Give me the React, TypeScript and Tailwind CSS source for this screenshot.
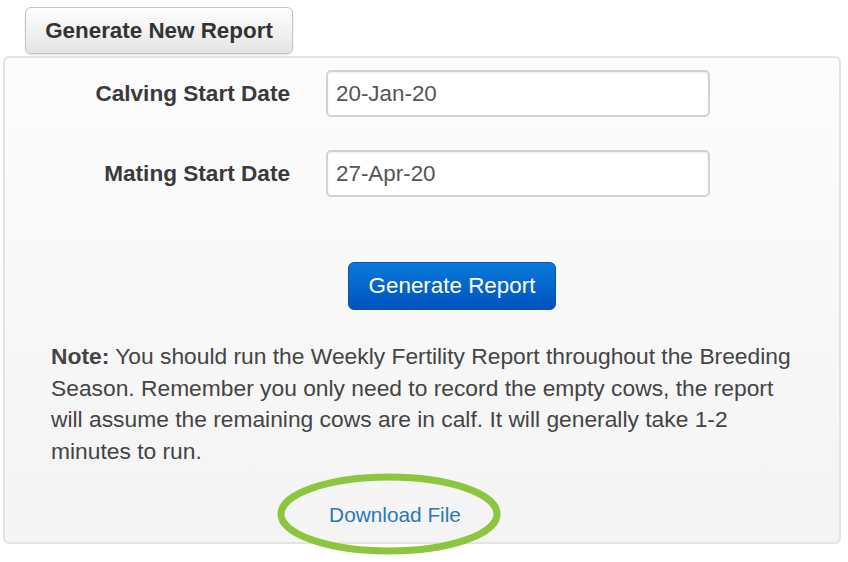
const fields = [
  { label: "Calving Start Date", value: "20-Jan-20" },
  { label: "Mating Start Date", value: "27-Apr-20" },
];

const App = () => {
  return (
    <div
      className="w-[848px] h-[562px] bg-white text-[#333] overflow-hidden"
      style={{ fontFamily: '"Liberation Sans", Arial, sans-serif' }}
    >
      <div className="pt-[7px] pl-[25px]">
        <button className="w-[268px] h-[47px] rounded-[6px] border border-[#c4c4c4] bg-gradient-to-b from-white to-[#e4e4e4] text-[22.4px] font-bold text-[#333] shadow-[0_1px_2px_rgba(0,0,0,0.12)]">
          Generate New Report
        </button>
      </div>

      <div className="mt-[2px] ml-[3px] w-[838px] h-[488px] rounded-[6px] border-2 border-[#e3e3e3] bg-gradient-to-b from-[#fcfcfc] to-[#f4f4f4] px-[29px] pt-[12px]">
        <div className="flex flex-col gap-[33px]">
          {fields.map((f) => (
            <div key={f.label} className="flex items-center">
              <label className="w-[256px] text-right text-[22.6px] font-bold text-[#3a3a3a]">
                {f.label}
              </label>
              <input
                readOnly
                value={f.value}
                className="ml-[36px] w-[384px] h-[47px] rounded-[5px] border-2 border-[#d2d2d2] bg-white px-[8px] text-[22.4px] text-[#555] shadow-[inset_0_1px_2px_rgba(0,0,0,0.08)] outline-none"
              />
            </div>
          ))}
        </div>

        <div className="mt-[65px] ml-[314px]">
          <button className="w-[208px] h-[48px] rounded-[6px] border border-[#0a51b3] bg-gradient-to-b from-[#0b7ad9] to-[#0452bf] text-[22.4px] text-white">
            Generate Report
          </button>
        </div>

        <p className="mt-[31px] ml-[17px] w-[755px] text-[22.8px] leading-[31.5px] text-[#444]">
          <span className="font-bold">Note:</span> You should run the Weekly Fertility Report
          throughout the Breeding Season. Remember you only need to record the empty cows, the
          report will assume the remaining cows are in calf. It will generally take 1-2 minutes
          to run.
        </p>

        <div className="mt-[33px] ml-[295px] relative w-[132px] h-[30px] flex items-center justify-center">
          <a href="#" className="text-[20.8px] text-[#2a78b8] whitespace-nowrap">
            Download File
          </a>
          <svg
            className="absolute left-[-54px] top-[-28px] pointer-events-none"
            width="228"
            height="84"
            viewBox="0 0 228 84"
          >
            <ellipse cx="114" cy="42" rx="108" ry="37" fill="none" stroke="#8cc63f" strokeWidth="7" />
          </svg>
        </div>
      </div>
    </div>
  );
};

export default App;
